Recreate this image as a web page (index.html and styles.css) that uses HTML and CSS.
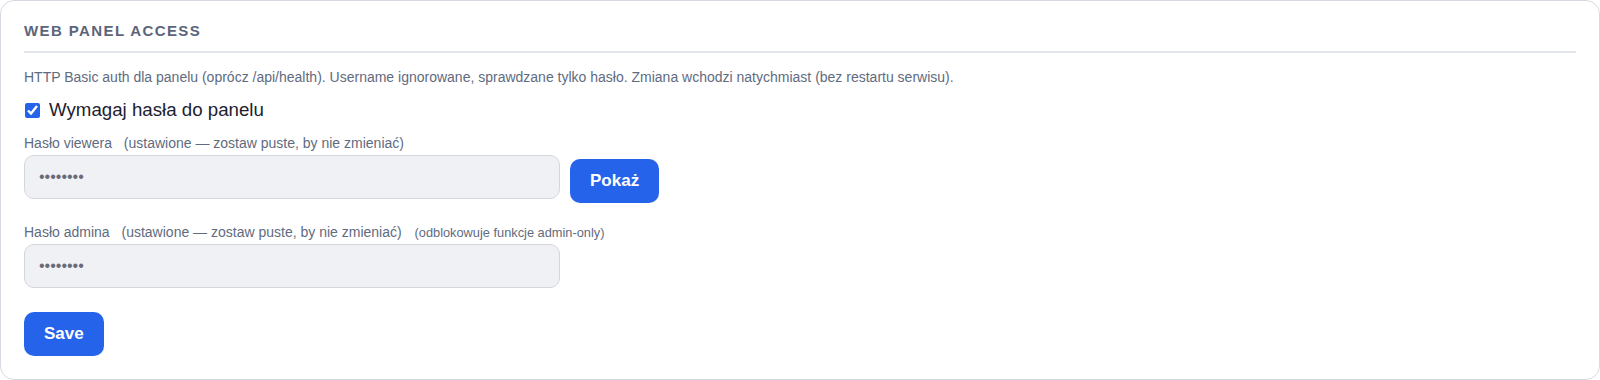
FILE: index.html
```html
<!DOCTYPE html>
<html lang="pl">
<head>
    <meta charset="UTF-8">
    <meta name="viewport" content="width=device-width, initial-scale=1.0">
    <title>Web panel access</title>
    <link rel="stylesheet" href="styles.css">
</head>
<body>
    <div class="card">
        <h2 class="card-title">Web panel access</h2>
        <p class="desc">HTTP Basic auth dla panelu (oprócz /api/health). Username ignorowane, sprawdzane tylko hasło. Zmiana wchodzi natychmiast (bez restartu serwisu).</p>

        <label class="check">
            <input type="checkbox" checked>
            <span>Wymagaj hasła do panelu</span>
        </label>

        <div class="field">
            <label class="field-label" for="viewerPass">Hasło viewera <span class="hint">(ustawione — zostaw puste, by nie zmieniać)</span></label>
            <div class="field-row">
                <input class="text-input" id="viewerPass" type="password" value="12345678">
                <button class="btn btn-show" type="button">Pokaż</button>
            </div>
        </div>

        <div class="field">
            <label class="field-label" for="adminPass">Hasło admina <span class="hint">(ustawione — zostaw puste, by nie zmieniać)</span> <span class="hint small">(odblokowuje funkcje admin-only)</span></label>
            <div class="field-row">
                <input class="text-input" id="adminPass" type="password" value="12345678">
            </div>
        </div>

        <button class="btn" type="button">Save</button>
    </div>
</body>
</html>
```

FILE: styles.css
```css
body {
    margin: 0;
    padding: 0;
    background-color: #fff;
    font-family: "Liberation Sans", Arial, sans-serif;
}

.card {
    box-sizing: border-box;
    height: 380px;
    border: 1px solid #d6d9e1;
    border-radius: 14px;
    padding: 21px 23px 0 23px;
    background-color: #fff;
}

.card-title {
    margin: 0;
    padding-bottom: 12px;
    border-bottom: 2px solid #e2e5eb;
    font-size: 15px;
    font-weight: bold;
    letter-spacing: 1.4px;
    text-transform: uppercase;
    color: #5b657a;
}

.desc {
    margin: 16px 0 0 0;
    font-size: 14px;
    color: #5f6b80;
}

.check {
    display: flex;
    align-items: center;
    gap: 9px;
    margin-top: 14px;
    font-size: 18.7px;
    color: #1c2130;
}

.check input {
    width: 15px;
    height: 15px;
    margin: 0 0 0 1px;
    accent-color: #2563eb;
}

.field {
    margin-top: 14px;
}

.field + .field {
    margin-top: 21px;
}

.field-label {
    display: block;
    margin-bottom: 4px;
    font-size: 14px;
    color: #5f6b80;
}

.hint {
    margin-left: 8px;
}

.hint.small {
    margin-left: 9px;
    font-size: 12.8px;
}

.field-row {
    display: flex;
    align-items: flex-start;
    gap: 10px;
}

.text-input {
    box-sizing: border-box;
    width: 536px;
    height: 44px;
    margin: 0;
    padding: 0 14px;
    border: 1px solid #d3d6dd;
    border-radius: 10px;
    background-color: #f0f1f5;
    font-family: "Liberation Sans", Arial, sans-serif;
    font-size: 16px;
    color: #6b6b78;
}

.btn {
    height: 44px;
    padding: 0 20px;
    border: none;
    border-radius: 10px;
    background-color: #2563eb;
    color: #fff;
    font-family: "Liberation Sans", Arial, sans-serif;
    font-size: 17px;
    font-weight: bold;
    cursor: pointer;
}

.btn-show {
    margin-top: 4px;
}

.card > .btn {
    margin-top: 24px;
}
```
